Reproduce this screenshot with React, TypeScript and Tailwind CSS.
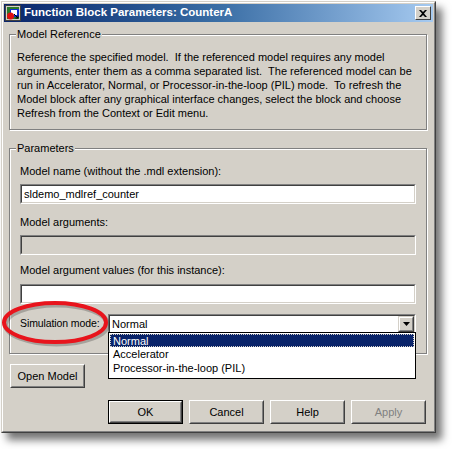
import React from "react";

const font = { fontFamily: '"Liberation Sans", Arial, sans-serif' };

function ClassicButton({ label, isDefault, disabled }: { label: string; isDefault?: boolean; disabled?: boolean }) {
  return (
    <div className={`w-[75px] h-[24px] ${isDefault ? "border border-black" : ""}`}>
      <div className="w-full h-full bg-[#D4D0C8] border border-t-white border-l-white border-r-[#404040] border-b-[#404040] flex">
        <div className={`flex-1 flex items-center justify-center border border-t-[#D4D0C8] border-l-[#D4D0C8] border-r-[#808080] border-b-[#808080] text-[11px] ${disabled ? "text-[#808080]" : "text-black"}`}>
          {label}
        </div>
      </div>
    </div>
  );
}

function Sunken({ children, className = "" }: { children?: React.ReactNode; className?: string }) {
  return (
    <div className={`border border-t-[#808080] border-l-[#808080] border-r-white border-b-white ${className}`}>
      <div className="h-full border border-t-[#404040] border-l-[#404040] border-r-[#D4D0C8] border-b-[#D4D0C8] flex items-center">
        {children}
      </div>
    </div>
  );
}

function TitleIcon() {
  return (
    <svg width="16" height="16" viewBox="0 0 16 16">
      <rect x="0.5" y="0.5" width="15" height="15" fill="#D4D0C8" stroke="#404040" />
      <rect x="2" y="2" width="12" height="12" fill="#2a7a2a" />
      <rect x="5" y="4" width="9" height="8" fill="#1030d0" />
      <rect x="6" y="5" width="6" height="5" fill="#ffffff" />
      <circle cx="5.5" cy="11" r="3.5" fill="#e01010" />
      <path d="M9 9 L13 13 M13 13 L13 10.5 M13 13 L10.5 13" stroke="#000" strokeWidth="1" fill="none" />
    </svg>
  );
}

export default function App() {
  return (
    <div className="w-[452px] h-[449px] bg-white relative overflow-hidden text-black" style={font}>
      <div className="ml-[1px] mt-[1px] w-[435px] h-[432px] bg-[#D4D0C8] border border-t-[#D4D0C8] border-l-[#D4D0C8] border-r-[#404040] border-b-[#404040] shadow-[6px_7px_8px_rgba(0,0,0,0.55)]">
        <div className="w-full h-full border border-t-white border-l-white border-r-[#808080] border-b-[#808080] p-[1px] flex flex-col">
          {/* Title bar */}
          <div className="h-[18px] flex items-center bg-gradient-to-r from-[#0A246A] via-[#3a6ea5] to-[#A6CAF0] pl-[1px] pr-[2px]">
            <TitleIcon />
            <div className="ml-[3px] text-white font-bold text-[11.5px] flex-1 leading-none">
              Function Block Parameters: CounterA
            </div>
            <div className="w-[16px] h-[14px] bg-[#D4D0C8] border border-t-white border-l-white border-r-[#404040] border-b-[#404040] flex items-center justify-center">
              <svg width="8" height="7" viewBox="0 0 8 7">
                <path d="M0 0 L2 0 L4 2 L6 0 L8 0 L5 3.5 L8 7 L6 7 L4 5 L2 7 L0 7 L3 3.5 Z" fill="#000" />
              </svg>
            </div>
          </div>

          {/* Model Reference group */}
          <div className="relative mt-[12px] ml-[5px] w-[418px] h-[96px] border border-[#808080] shadow-[1px_1px_0_#fff,inset_1px_1px_0_#fff] pl-[7px] pt-[15px]">
            <div className="absolute left-[6px] top-[-8px] px-[1px] bg-[#D4D0C8] text-[11px] leading-[14px]">Model Reference</div>
            <div className="text-[11px] leading-[14px] w-[400px]">
              Reference the specified model.&nbsp; If the referenced model requires any model arguments, enter them as a comma separated list.&nbsp; The referenced model can be run in Accelerator, Normal, or Processor-in-the-loop (PIL) mode.&nbsp; To refresh the Model block after any graphical interface changes, select the block and choose Refresh from the Context or Edit menu.
            </div>
          </div>

          {/* Parameters group */}
          <div className="relative mt-[18px] ml-[5px] w-[418px] h-[206px] border border-[#808080] shadow-[1px_1px_0_#fff,inset_1px_1px_0_#fff] pl-[10px] pr-[10px] pt-[15px] flex flex-col">
            <div className="absolute left-[6px] top-[-8px] px-[1px] bg-[#D4D0C8] text-[11px] leading-[14px]">Parameters</div>
            <div className="text-[11px] leading-[14px]">Model name (without the .mdl extension):</div>
            <Sunken className="mt-[6px] h-[20px] bg-white">
              <span className="text-[11px] pl-[2px]">sldemo_mdlref_counter</span>
            </Sunken>
            <div className="mt-[11px] text-[11px] leading-[14px]">Model arguments:</div>
            <Sunken className="mt-[6px] h-[20px] bg-[#D4D0C8]" />
            <div className="mt-[8px] text-[11px] leading-[14px]">Model argument values (for this instance):</div>
            <Sunken className="mt-[7px] h-[20px] bg-white" />
            <div className="mt-[10px] flex items-center h-[20px]">
              <div className="w-[88px] text-[10.5px] tracking-[-0.1px]">Simulation mode:</div>
              <Sunken className="flex-1 h-[20px] bg-white">
                <span className="flex-1 text-[11px] pl-[2px]">Normal</span>
                <div className="w-[16px] h-[16px] bg-[#D4D0C8] border border-t-[#D4D0C8] border-l-[#D4D0C8] border-r-[#404040] border-b-[#404040]">
                  <div className="w-full h-full border border-t-white border-l-white border-r-[#808080] border-b-[#808080] flex items-center justify-center">
                    <svg width="7" height="4" viewBox="0 0 7 4"><path d="M0 0 H7 L3.5 4 Z" fill="#000" /></svg>
                  </div>
                </div>
              </Sunken>
            </div>
          </div>

          {/* Bottom area */}
          <div className="relative flex flex-col pl-[6px]">
            <div className="mt-[10px]">
              <ClassicButton label="Open Model" />
            </div>
            <div className="mt-[12px] ml-[98px] flex gap-[6px]">
              <ClassicButton label="OK" isDefault />
              <ClassicButton label="Cancel" />
              <ClassicButton label="Help" />
              <ClassicButton label="Apply" disabled />
            </div>
          </div>
        </div>
      </div>

      {/* Dropdown list (overlay) */}
      <div className="absolute left-[108px] top-[332px] w-[308px] h-[47px] bg-white border border-black text-[11px] leading-[14px] p-[1px]">
        <div className="h-[13px] bg-[#0A246A] text-white pl-[2px] flex items-center border border-dotted border-[#D4D0C8]">Normal</div>
        <div className="pl-[3px] h-[14px] flex items-center">Accelerator</div>
        <div className="pl-[3px] h-[14px] flex items-center">Processor-in-the-loop (PIL)</div>
      </div>

      {/* Red ellipse annotation */}
      <svg className="absolute left-0 top-[296px]" width="114" height="54" viewBox="0 0 114 54">
        <ellipse cx="55" cy="26.5" rx="51" ry="19.5" fill="none" stroke="rgba(0,0,0,0.22)" strokeWidth="5" transform="translate(1.5,2)" />
        <ellipse cx="55" cy="26.5" rx="51" ry="19.5" fill="none" stroke="#E8141C" strokeWidth="4" />
      </svg>
    </div>
  );
}
